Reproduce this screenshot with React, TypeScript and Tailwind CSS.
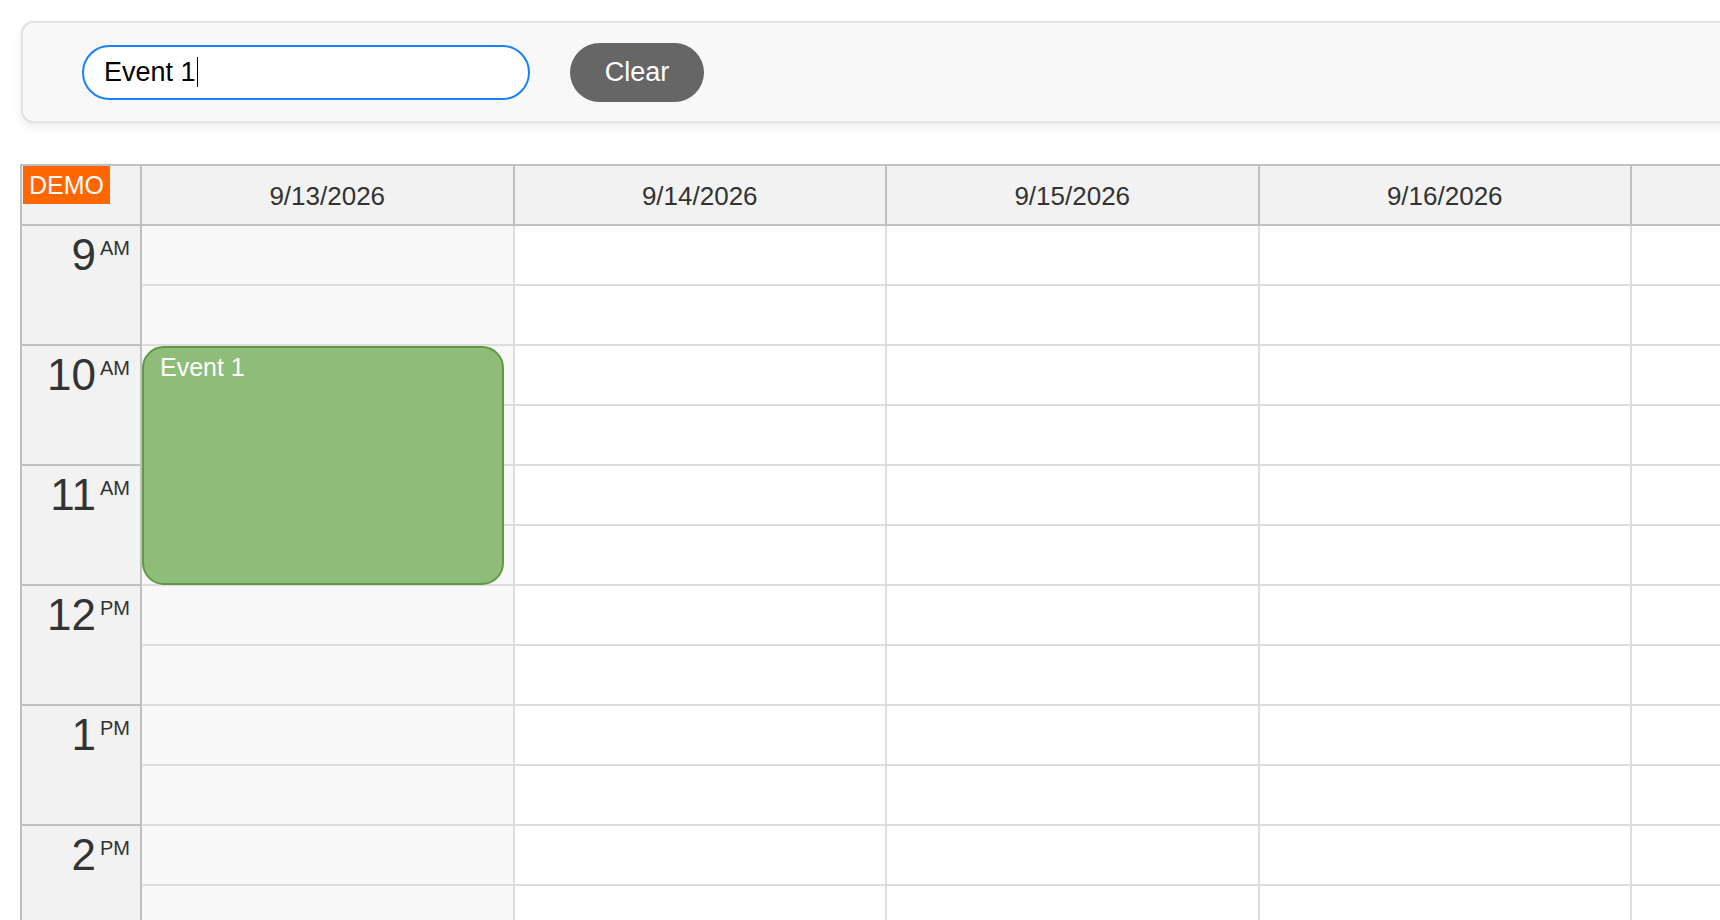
import React from 'react';

type Hour = { num: string; ampm: string };

const hours: Hour[] = [
    { num: '9', ampm: 'AM' },
    { num: '10', ampm: 'AM' },
    { num: '11', ampm: 'AM' },
    { num: '12', ampm: 'PM' },
    { num: '1', ampm: 'PM' },
    { num: '2', ampm: 'PM' },
];

// last column only peeks in at the right edge, its header stays blank
const days = ['9/13/2026', '9/14/2026', '9/15/2026', '9/16/2026', ''];

function Toolbar() {
    return (
        <div className="ml-[21px] w-[2000px] h-[102px] flex items-center gap-[40px] pl-[59px] bg-[#f8f8f8] border-2 border-[#e2e2e2] rounded-[12px] shadow-[0_4px_10px_rgba(0,0,0,0.08)]">
            {/* search box, focused */}
            <div className="w-[448px] h-[55px] flex items-center pl-[20px] bg-white border-2 border-[#1a82f7] rounded-full text-[27px] text-black">
                <span>Event 1</span>
                <span className="inline-block w-[1.5px] h-[30px] bg-black ml-[1px]" />
            </div>
            <button className="w-[134px] h-[59px] rounded-full bg-[#666666] text-white text-[27px]">
                Clear
            </button>
        </div>
    );
}

function HourLabel({ hour }: { hour: Hour }) {
    return (
        <div className="h-[120px] flex justify-end items-start pt-[7px] pr-[10px] bg-[#f2f2f2] border-b-2 border-[#c0c0c0] text-[#333]">
            <span className="text-[44px] leading-none">{hour.num}</span>
            <span className="text-[20px] leading-none mt-[5px] ml-[4px]">{hour.ampm}</span>
        </div>
    );
}

function DayColumn({ shaded, children }: { shaded?: boolean; children?: React.ReactNode }) {
    return (
        <div className={shaded ? 'relative w-[372.5px] shrink-0 border-r-2 border-[#dddddd] bg-[#f8f8f8]' : 'relative w-[372.5px] shrink-0 border-r-2 border-[#dddddd] bg-white'}>
            {hours.map((h) => (
                <React.Fragment key={h.num + h.ampm}>
                    <div className="h-[60px] border-b-2 border-[#dddddd]" />
                    <div className="h-[60px] border-b-2 border-[#dddddd]" />
                </React.Fragment>
            ))}
            {children}
        </div>
    );
}

function Calendar() {
    return (
        <div className="ml-[20px] mt-[41px] w-[2000px] border-t-2 border-l-2 border-[#c0c0c0]">
            {/* header row */}
            <div className="flex h-[60px] border-b-2 border-[#c0c0c0] bg-[#f2f2f2]">
                <div className="relative w-[120px] shrink-0 border-r-2 border-[#c0c0c0]">
                    <div className="absolute top-0 left-[1px] px-[6px] py-[4px] bg-[#ff6600] text-white text-[25px] leading-[30px]">
                        DEMO
                    </div>
                </div>
                {days.map((d, i) => (
                    <div key={i} className="w-[372.5px] shrink-0 flex items-center justify-center pt-[2px] border-r-2 border-[#c0c0c0] text-[26px] text-[#333]">
                        {d}
                    </div>
                ))}
            </div>

            {/* body */}
            <div className="flex">
                <div className="w-[120px] shrink-0 border-r-2 border-[#c0c0c0]">
                    {hours.map((h) => (
                        <HourLabel key={h.num + h.ampm} hour={h} />
                    ))}
                </div>
                {days.map((d, i) => (
                    <DayColumn key={i} shaded={i === 0}>
                        {i === 0 && (
                            <div className="absolute top-[120px] left-0 right-[9px] h-[239px] rounded-[22px] bg-[#8dbd78] border-2 border-[#5f9a43] px-[16px] pt-[1px] text-white text-[25px]">
                                Event 1
                            </div>
                        )}
                    </DayColumn>
                ))}
            </div>
        </div>
    );
}

export default function App() {
    return (
        <div className="w-[1720px] h-[920px] overflow-hidden bg-white pt-[21px] font-['Liberation_Sans',Arial,sans-serif]">
            <Toolbar />
            <Calendar />
        </div>
    );
}
